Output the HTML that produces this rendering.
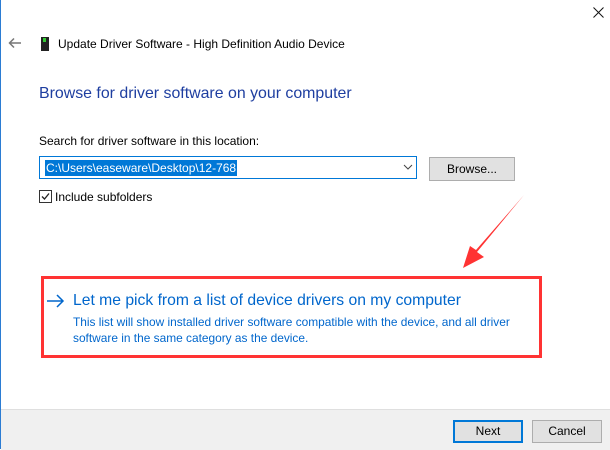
<html><head><style>
body{margin:0;width:610px;height:449px;background:#fff;position:relative;overflow:hidden;font-family:"Liberation Sans",sans-serif;font-size:12px;color:#000}
.a{position:absolute;white-space:nowrap}
.btn{position:absolute;background:#e1e1e1;border:1px solid #adadad;box-sizing:border-box;text-align:center;font-size:12px}
</style></head><body>
<div class="a" style="left:0;top:0;width:1px;height:449px;background:#2b7cd3"></div>
<svg class="a" style="left:593px;top:7px" width="11" height="11"><path d="M0.5 0.5L10.5 10.5M10.5 0.5L0.5 10.5" stroke="#111" stroke-width="1"/></svg>
<svg class="a" style="left:8px;top:37px" width="14" height="12"><path d="M13 6H2M6 1.5L1.5 6L6 10.5" stroke="#777" stroke-width="1.5" fill="none"/></svg>
<div class="a" style="left:41px;top:37px;width:8px;height:14px;background:#222"></div>
<div class="a" style="left:43px;top:38px;width:3px;height:4px;background:#3c3"></div>
<div class="a" style="left:58px;top:37px;font-size:12px">Update Driver Software - High Definition Audio Device</div>
<div class="a" style="left:39px;top:85px;font-size:15.9px;color:#1e3ea0">Browse for driver software on your computer</div>
<div class="a" style="left:39px;top:134px">Search for driver software in this location:</div>
<div class="a" style="left:39px;top:156px;width:378px;height:23px;border:1px solid #0078d7;box-sizing:border-box"></div>
<div class="a" style="left:45px;top:160px;background:#0078d7;color:#fff;padding:0 1px;line-height:16px">C:\Users\easeware\Desktop\12-768</div>
<svg class="a" style="left:403px;top:164px" width="10" height="6"><path d="M1 1L5 5L9 1" stroke="#444" fill="none"/></svg>
<div class="btn" style="left:429px;top:157px;width:86px;height:24px;line-height:22px">Browse...</div>
<div class="a" style="left:39px;top:190px;width:13px;height:13px;border:1px solid #333;box-sizing:border-box"></div>
<svg class="a" style="left:40px;top:191px" width="11" height="11"><path d="M2 5.5L4.5 8L9 2.5" stroke="#222" stroke-width="1.3" fill="none"/></svg>
<div class="a" style="left:55px;top:190px">Include subfolders</div>
<svg class="a" style="left:455px;top:190px" width="75" height="85"><path d="M69 5L22 62L29 67L8 78L15 56L21 60Z" fill="#f33"/></svg>
<div class="a" style="left:41px;top:276px;width:501px;height:82px;border:3px solid #f33;box-sizing:border-box"></div>
<svg class="a" style="left:46px;top:294px" width="19" height="14"><path d="M1 7H17M11 1L17 7L11 13" stroke="#0066cc" stroke-width="1.5" fill="none"/></svg>
<div class="a" style="left:73px;top:292px;font-size:15.7px;color:#0066cc">Let me pick from a list of device drivers on my computer</div>
<div class="a" style="left:73px;top:314px;font-size:11.9px;color:#0066cc;line-height:16px">This list will show installed driver software compatible with the device, and all driver<br>software in the same category as the device.</div>
<div class="a" style="left:1px;top:409px;width:609px;height:40px;background:#f0f0f0;border-top:1px solid #dfdfdf"></div>
<div class="btn" style="left:453px;top:420px;width:70px;height:23px;line-height:19px;border:2px solid #0078d7">Next</div>
<div class="btn" style="left:532px;top:420px;width:70px;height:23px;line-height:21px">Cancel</div>
</body></html>
